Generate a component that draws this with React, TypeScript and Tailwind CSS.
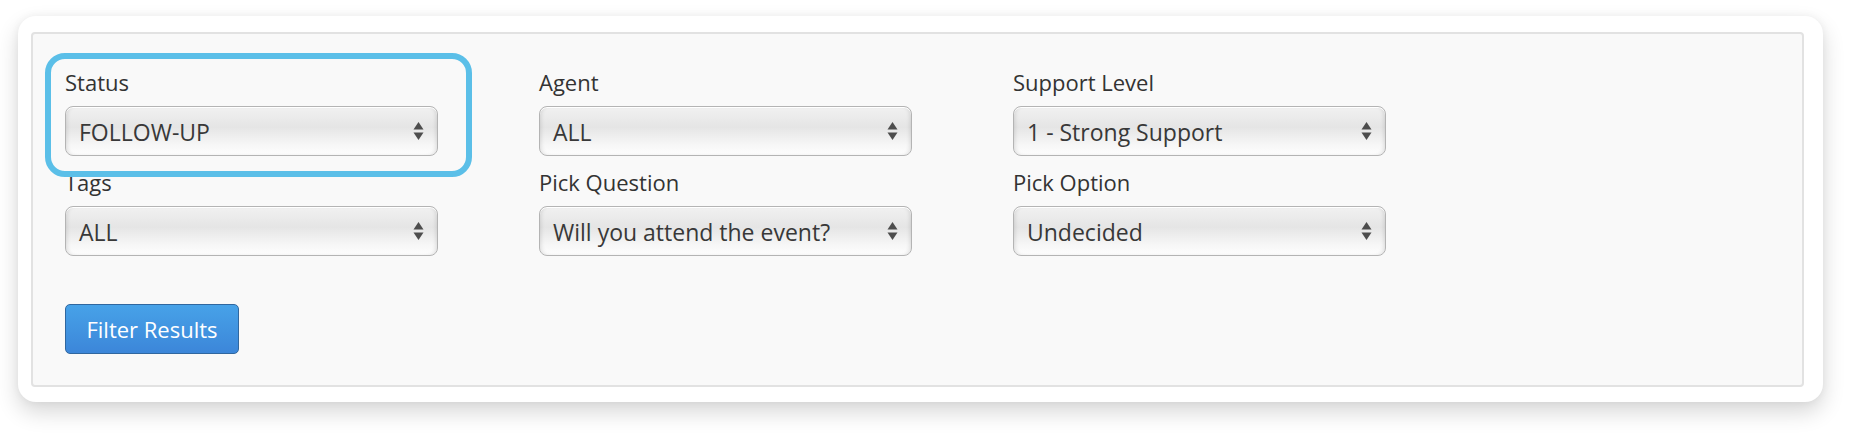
import { ReactNode } from "react";

// ── Filter form field data ─────────────────────────────────────
const rows: { label: string; value: string }[][] = [
  [
    { label: "Status", value: "FOLLOW-UP" },
    { label: "Agent", value: "ALL" },
    { label: "Support Level", value: "1 - Strong Support" },
  ],
  [
    { label: "Tags", value: "ALL" },
    { label: "Pick Question", value: "Will you attend the event?" },
    { label: "Pick Option", value: "Undecided" },
  ],
];

function SelectArrows() {
  return (
    <svg width="11" height="20" viewBox="0 0 11 20" className="shrink-0">
      <path d="M5.5 1 L10.5 8.5 H0.5 Z" fill="#4d4d4d" />
      <path d="M5.5 19 L10.5 11.5 H0.5 Z" fill="#4d4d4d" />
    </svg>
  );
}

function FakeSelect({ value }: { value: string }) {
  return (
    <div className="flex h-[50px] w-[373px] items-center justify-between rounded-[8px] border-[1.5px] border-[#b4b4b4] bg-[linear-gradient(to_bottom,#f1f1f1_0%,#e5e5e5_42%,#f7f7f7_80%,#fdfdfd_100%)] pl-[13px] pr-[13px] shadow-[inset_0_1px_0_#ffffff,inset_3px_0_4px_-2px_rgba(0,0,0,0.12),inset_-3px_0_4px_-2px_rgba(0,0,0,0.12)]">
      <span className="pt-[3px] text-[23px] leading-none text-[#383838]">
        {value}
      </span>
      <SelectArrows />
    </div>
  );
}

function Field({ label, children }: { label: string; children: ReactNode }) {
  return (
    <div className="flex w-[373px] flex-col gap-[8px]">
      <label className="h-[32px] text-[22px] leading-[32px] text-[#333]">
        {label}
      </label>
      {children}
    </div>
  );
}

export default function App() {
  return (
    <div className="h-[442px] w-[1862px] bg-white font-['Open_Sans',sans-serif]">
      <div className="pl-[18px] pt-[16px]">
        <div className="w-[1805px] rounded-[18px] bg-white pb-[15px] pl-[13px] pr-[19px] pt-[16px] shadow-[0_10px_22px_rgba(0,0,0,0.16),0_0_8px_rgba(0,0,0,0.05)]">
          {/* Inner filter panel */}
          <div className="relative h-[355px] rounded-[4px] border-2 border-[#e2e2e2] bg-[#f9f9f9] pl-[32px] pt-[32px]">
            <div className="flex flex-col gap-[10px]">
              {rows.map((row, i) => (
                <div key={i} className="flex gap-[101px]">
                  {row.map((f) => (
                    <Field key={f.label} label={f.label}>
                      <FakeSelect value={f.value} />
                    </Field>
                  ))}
                </div>
              ))}
            </div>

            <button className="mt-[48px] flex h-[50px] w-[174px] items-center justify-center rounded-[5px] border-[1.5px] border-[#30679f] bg-[linear-gradient(to_bottom,#47a2e8_0%,#3c86d9_100%)] text-[22px] text-white">
              Filter Results
            </button>

            {/* Highlight annotation round the Status field */}
            <div className="pointer-events-none absolute left-[12px] top-[19px] h-[124px] w-[427px] rounded-[20px] border-[6px] border-[#5bbfe8]" />
          </div>
        </div>
      </div>
    </div>
  );
}
